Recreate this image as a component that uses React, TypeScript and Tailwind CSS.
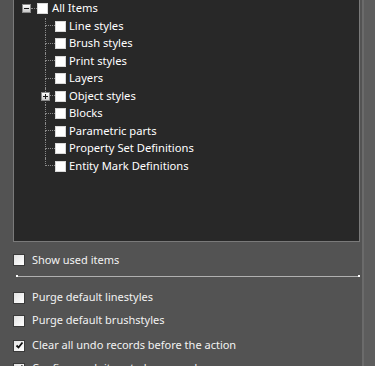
import React from 'react';

const font = { fontFamily: '"Noto Sans", "Open Sans", Arial, sans-serif' };

interface TreeItem {
  label: string;
  expandable?: boolean;
}

const items: TreeItem[] = [
  { label: 'Line styles' },
  { label: 'Brush styles' },
  { label: 'Print styles' },
  { label: 'Layers' },
  { label: 'Object styles', expandable: true },
  { label: 'Blocks' },
  { label: 'Parametric parts' },
  { label: 'Property Set Definitions' },
  { label: 'Entity Mark Definitions' },
];

const TreeBox = () => (
  <div className="w-[11px] h-[11px] shrink-0 bg-white border border-[#d8d8d8]" />
);

const Expander = ({ open }: { open: boolean }) => (
  <div className="w-[9px] h-[9px] shrink-0 flex items-center justify-center bg-gradient-to-b from-white to-[#c8c8c8] border border-[#8a8a8a]">
    <svg width="7" height="7" viewBox="0 0 7 7">
      <line x1="1" y1="3.5" x2="6" y2="3.5" stroke="#1a1a1a" strokeWidth="1" />
      {!open && <line x1="3.5" y1="1" x2="3.5" y2="6" stroke="#1a1a1a" strokeWidth="1" />}
    </svg>
  </div>
);

const CheckBox = ({ checked = false }: { checked?: boolean }) => (
  <div className="w-[12px] h-[12px] shrink-0 flex items-center justify-center border border-[#3a3a3a] bg-gradient-to-br from-[#e2e2e2] to-white">
    {checked && (
      <svg width="9" height="9" viewBox="0 0 9 9">
        <path d="M1.5 4.5 L3.5 6.5 L7.5 1.5" fill="none" stroke="#111" strokeWidth="1.8" />
      </svg>
    )}
  </div>
);

const OptionRow = ({ label, checked }: { label: string; checked?: boolean }) => (
  <div className="flex items-center gap-[7px] pl-[13px] h-[23px]">
    <CheckBox checked={checked} />
    <span className="text-[11px] text-[#f2f2f2]">{label}</span>
  </div>
);

export default function App() {
  return (
    <div className="w-[375px] h-[366px] overflow-hidden bg-[#535353] flex" style={font}>
      <div className="flex-1 flex flex-col">
        {/* tree panel, top edge scrolled off */}
        <div className="ml-[13px] w-[347px] h-[242px] shrink-0 bg-[#282828] border border-t-0 border-[#7a7a7a]">
          <div className="flex items-center h-[17.5px] pl-[8px]">
            <Expander open />
            <div className="w-[6px] border-t border-dotted border-[#8a8a8a]" />
            <TreeBox />
            <span className="ml-[4px] text-[11.2px] text-white">All Items</span>
          </div>
          {items.map((item, i) => {
            const last = i === items.length - 1;
            return (
              <div key={item.label} className="flex h-[17.5px] pl-[31px]">
                <div className="relative w-[10px] shrink-0 flex flex-col">
                  <div className="flex-1 flex">
                    <div className="border-l border-dotted border-[#8a8a8a]" />
                    <div className="flex-1 flex flex-col justify-end">
                      <div className="border-b border-dotted border-[#8a8a8a]" />
                    </div>
                  </div>
                  <div className={`flex-1 ${last ? '' : 'border-l border-dotted border-[#8a8a8a]'}`} />
                  {item.expandable && (
                    <div className="absolute left-[-4px] top-[4px]">
                      <Expander open={false} />
                    </div>
                  )}
                </div>
                <div className="flex items-center">
                  <TreeBox />
                  <span className="ml-[3px] text-[11.2px] text-white">{item.label}</span>
                </div>
              </div>
            );
          })}
        </div>

        <div className="flex items-center gap-[7px] pl-[13px] mt-[11px] h-[14px]">
          <CheckBox />
          <span className="text-[11px] text-[#f2f2f2]">Show used items</span>
        </div>

        <div className="ml-[16px] w-[344px] mt-[8px] h-[3px] flex items-center">
          <div className="w-[2px] h-[2px] bg-white" />
          <div className="flex-1 h-[1px] bg-[#b0b0b0]" />
          <div className="w-[2px] h-[2px] bg-white" />
        </div>

        <div className="mt-[9px]">
          <OptionRow label="Purge default linestyles" />
          <OptionRow label="Purge default brushstyles" />
          <div className="h-[2px]" />
          <OptionRow label="Clear all undo records before the action" checked />
          <OptionRow label="Confirm each item to be purged" checked />
        </div>
      </div>
      <div className="w-[13px] shrink-0 bg-[#5d5d5d] border-l-2 border-[#6b6b6b]" />
    </div>
  );
}
